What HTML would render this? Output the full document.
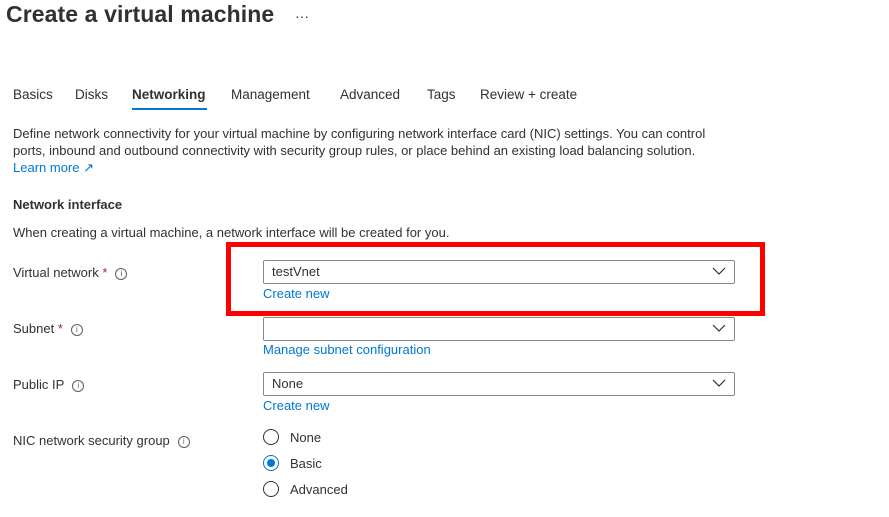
<!DOCTYPE html>
<html><head><style>
body{margin:0;width:889px;height:517px;background:#fff;font-family:"Liberation Sans",sans-serif;color:#323130;position:relative;overflow:hidden}
.a{position:absolute;white-space:nowrap;font-size:13px}
.t{font-size:23px;font-weight:bold;left:6px;top:1px;color:#323130;letter-spacing:0.1px}
.tab{top:87px;font-size:13.5px}
.link{color:#0078d4}
.dd{position:absolute;left:263px;width:470px;height:22px;border:1px solid #8a8886;border-radius:2px}
.dd span{position:absolute;left:8px;top:3px;font-size:13px}
.dd svg{position:absolute;right:8px;top:6px}
.info{display:inline-block;width:10px;height:10px;border:1px solid #605e5c;border-radius:50%;font-size:8px;line-height:10px;text-align:center;vertical-align:1px;margin-left:8px;color:#605e5c}
.star{color:#a4262c}
.r{position:absolute;left:263px;width:16px;height:16px;border:1px solid #323130;border-radius:50%;box-sizing:border-box}
</style></head><body>
<div class="a t">Create a virtual machine</div>
<div class="a" style="left:295px;top:8px;font-size:14px">···</div>
<div class="a tab" style="left:13px">Basics</div>
<div class="a tab" style="left:75px">Disks</div>
<div class="a tab" style="left:132px;font-weight:bold">Networking</div>
<div style="position:absolute;left:132px;top:108px;width:75px;height:2px;background:#0078d4"></div>
<div class="a tab" style="left:231px">Management</div>
<div class="a tab" style="left:340px">Advanced</div>
<div class="a tab" style="left:427px">Tags</div>
<div class="a tab" style="left:480px">Review + create</div>
<div class="a" style="left:13px;top:125px;line-height:17px">Define network connectivity for your virtual machine by configuring network interface card (NIC) settings. You can control<br>ports, inbound and outbound connectivity with security group rules, or place behind an existing load balancing solution.<br><span class="link">Learn more ↗</span></div>
<div class="a" style="left:13px;top:197px;font-weight:bold">Network interface</div>
<div class="a" style="left:13px;top:225px">When creating a virtual machine, a network interface will be created for you.</div>
<div class="a" style="left:13px;top:265px">Virtual network <span class="star">*</span><span class="info">i</span></div>
<div class="a" style="left:13px;top:321px">Subnet <span class="star">*</span><span class="info">i</span></div>
<div class="a" style="left:13px;top:377px">Public IP<span class="info">i</span></div>
<div class="a" style="left:13px;top:433px">NIC network security group<span class="info">i</span></div>
<div class="dd" style="top:260px"><span>testVnet</span><svg width="14" height="9"><path d="M1 1l6 6 6-6" fill="none" stroke="#323130" stroke-width="1.2"/></svg></div>
<div class="a link" style="left:263px;top:286px">Create new</div>
<div class="dd" style="top:317px"><svg width="14" height="9"><path d="M1 1l6 6 6-6" fill="none" stroke="#323130" stroke-width="1.2"/></svg></div>
<div class="a link" style="left:263px;top:342px">Manage subnet configuration</div>
<div class="dd" style="top:372px"><span>None</span><svg width="14" height="9"><path d="M1 1l6 6 6-6" fill="none" stroke="#323130" stroke-width="1.2"/></svg></div>
<div class="a link" style="left:263px;top:398px">Create new</div>
<div class="r" style="top:429px"></div><div class="a" style="left:290px;top:430px">None</div>
<div class="r" style="top:455px;border-color:#0078d4"><div style="position:absolute;left:3px;top:3px;width:8px;height:8px;border-radius:50%;background:#0078d4"></div></div><div class="a" style="left:290px;top:456px">Basic</div>
<div class="r" style="top:481px"></div><div class="a" style="left:290px;top:482px">Advanced</div>
<div style="position:absolute;left:226px;top:242px;width:529px;height:64px;border:5px solid #ff0000"></div>
</body></html>
